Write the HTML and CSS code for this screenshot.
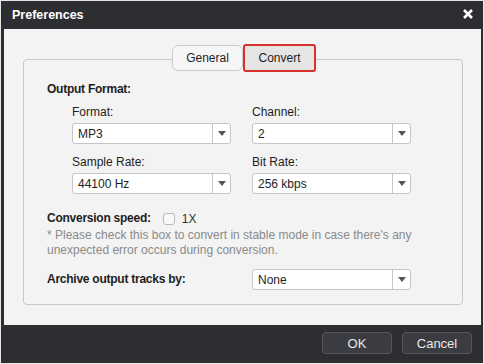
FILE: index.html
```html
<!DOCTYPE html>
<html>
<head>
<meta charset="utf-8">
<link rel="stylesheet" href="styles.css">
</head>
<body>
<div class="window">
  <div class="titlebar">
    <span class="title">Preferences</span>
    <svg class="close" width="10" height="10" viewBox="0 0 10 10"><path d="M1 1 L9 9 M9 1 L1 9" stroke="#fff" stroke-width="2.6" stroke-linecap="butt"/></svg>
  </div>
  <div class="content">
    <div class="tabs">
      <div class="tab">General</div>
      <div class="tab active">Convert</div>
    </div>
    <div class="panel">
      <div class="heading">Output Format:</div>
      <div class="grid">
        <div class="field">
          <div class="label">Format:</div>
          <div class="select"><span class="value">MP3</span><span class="arrow"></span></div>
        </div>
        <div class="field">
          <div class="label">Channel:</div>
          <div class="select"><span class="value">2</span><span class="arrow"></span></div>
        </div>
        <div class="field">
          <div class="label">Sample Rate:</div>
          <div class="select"><span class="value">44100 Hz</span><span class="arrow"></span></div>
        </div>
        <div class="field">
          <div class="label">Bit Rate:</div>
          <div class="select"><span class="value">256 kbps</span><span class="arrow"></span></div>
        </div>
      </div>
      <div class="speed">
        <span class="heading">Conversion speed:</span>
        <span class="checkbox"></span>
        <span class="speed-text">1X</span>
      </div>
      <div class="note">* Please check this box to convert in stable mode in case there's any<br>unexpected error occurs during conversion.</div>
      <div class="archive">
        <span class="heading archive-label">Archive output tracks by:</span>
        <div class="select"><span class="value">None</span><span class="arrow"></span></div>
      </div>
    </div>
  </div>
  <div class="footer">
    <div class="btn">OK</div>
    <div class="btn">Cancel</div>
  </div>
</div>
</body>
</html>
```

FILE: styles.css
```css
html, body {
  margin: 0;
  padding: 0;
  background: #e6e6e6;
}
body {
  font-family: "Liberation Sans", Arial, sans-serif;
  font-size: 12px;
  color: #1e1e1e;
}
.window {
  margin: 1px;
  width: 482px;
  height: 362px;
  background: #2d2e32;
  display: flex;
  flex-direction: column;
}
.titlebar {
  height: 28px;
  flex: none;
  display: flex;
  align-items: center;
  justify-content: space-between;
  padding: 0 10px 0 11px;
}
.title {
  color: #fff;
  font-weight: bold;
  font-size: 12.5px;
}
.close {
  margin-top: -2px;
}
.content {
  height: 296px;
  flex: none;
  margin: 0 2px 0 3px;
  background: #f3f3f3;
  box-sizing: border-box;
  padding: 15px 18px 20px 19px;
  display: flex;
  flex-direction: column;
}
.tabs {
  display: flex;
  justify-content: center;
  align-items: center;
  height: 28px;
  margin-bottom: -13px;
  position: relative;
  z-index: 1;
  padding-left: 2px;
}
.tab {
  height: 26px;
  box-sizing: border-box;
  border: 1px solid #cbcbcb;
  border-radius: 6px;
  background: #f6f6f6;
  width: 71px;
  display: flex;
  align-items: center;
  justify-content: center;
  color: #1e1e1e;
}
.tab.active {
  height: 28px;
  width: 73px;
  border: 2px solid #d8302c;
  border-radius: 3px;
  background: #e5e5e5;
}
.panel {
  flex: 1;
  border: 1px solid #c8c8c8;
  border-radius: 4px;
  padding: 22px 20px 13px 23px;
  display: flex;
  flex-direction: column;
}
.heading {
  font-weight: bold;
  font-size: 12px;
  line-height: 15px;
  letter-spacing: -0.25px;
  color: #1e1e1e;
}
.grid {
  display: grid;
  grid-template-columns: 159px 159px;
  column-gap: 21px;
  row-gap: 11px;
  margin: 8px 0 0 25px;
}
.label {
  line-height: 15px;
  margin-bottom: 3px;
}
.select {
  height: 21px;
  box-sizing: border-box;
  border: 1px solid #c6c6c6;
  border-radius: 3px;
  background: #fff;
  display: flex;
  align-items: center;
}
.value {
  flex: 1;
  padding-left: 5px;
  color: #1e1e1e;
}
.arrow {
  width: 17px;
  height: 100%;
  border-left: 1px solid #c6c6c6;
  display: flex;
  align-items: center;
  justify-content: center;
}
.arrow::before {
  content: "";
  width: 0;
  height: 0;
  border-left: 4px solid transparent;
  border-right: 4px solid transparent;
  border-top: 5px solid #555;
}
.grid .select {
  width: 159px;
}
.speed {
  display: flex;
  align-items: center;
  margin-top: 17px;
  height: 15px;
}
.checkbox {
  width: 12px;
  height: 12px;
  box-sizing: border-box;
  border: 1px solid #b9b9b9;
  border-radius: 3px;
  background: #f8f8f8;
  margin: 0 7px 0 12px;
}
.speed-text {
  color: #333;
}
.note {
  margin-top: 2px;
  color: #8a8a8a;
  line-height: 15px;
  white-space: nowrap;
}
.archive {
  display: flex;
  align-items: center;
  margin-top: 11px;
}
.archive-label {
  width: 205px;
  flex: none;
}
.archive .select {
  width: 159px;
}
.footer {
  flex: 1;
  display: flex;
  justify-content: flex-end;
  align-items: flex-start;
  gap: 10px;
  padding: 7px 11px 0 0;
}
.btn {
  width: 70px;
  height: 22px;
  box-sizing: border-box;
  border: 1px solid #55565b;
  border-radius: 4px;
  background: #3b3c41;
  color: #e8e8e8;
  font-size: 13px;
  display: flex;
  align-items: center;
  justify-content: center;
}
```
